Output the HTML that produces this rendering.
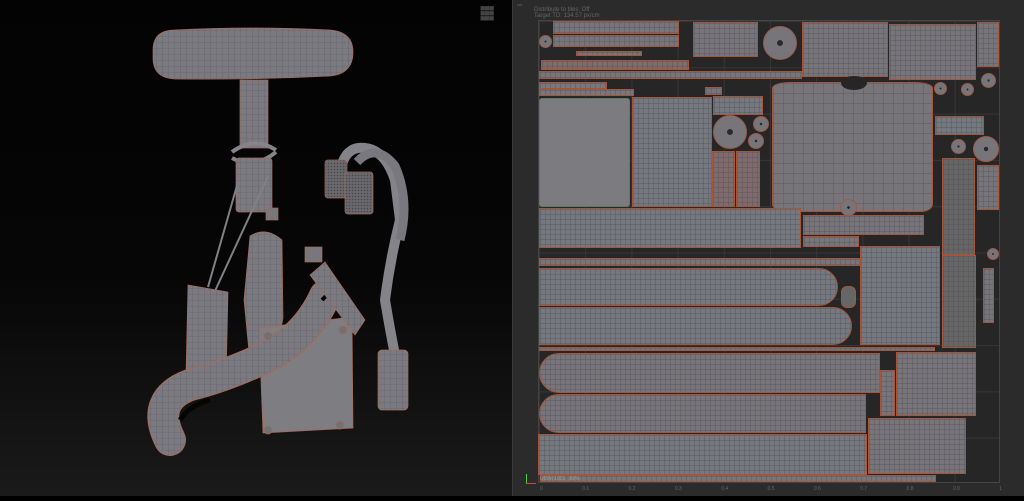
<!DOCTYPE html>
<html><head><meta charset="utf-8"><style>
*{margin:0;padding:0;box-sizing:border-box}
body{width:1024px;height:496px;overflow:hidden;background:#000;position:relative;font-family:"Liberation Sans",sans-serif}
#left{position:absolute;left:0;top:0;width:512px;height:496px;background:linear-gradient(#030303 0%,#060606 55%,#1a1a1a 100%)}
#right{position:absolute;left:512px;top:0;width:512px;height:496px;background:#2b2b2b;border-left:1px solid #3a3a3a}
.uv{position:absolute;left:538px;top:20px;width:462px;height:463px;border:1px solid #444;
background-color:#262626;
background-image:linear-gradient(#363636 1px,transparent 1px),linear-gradient(90deg,#363636 1px,transparent 1px);
background-size:46.2px 46.3px}
.i{position:absolute;border:1px solid #a5553a;background-color:#777579;
background-image:linear-gradient(rgba(70,70,80,.28) 1px,transparent 1px),linear-gradient(90deg,rgba(70,70,80,.28) 1px,transparent 1px);
background-size:5px 5px}
.b{background-color:#76787f}
.r{background-color:#7f6b6b}
.g{background-color:#666}
.c{position:absolute;border-radius:50%;background:radial-gradient(#2a2a2a 0 12%,#777579 14%);border:1px solid #9a5a48}
.t{position:absolute;color:#666;font-size:6px}
</style></head><body>
<div id="left">
<svg width="512" height="496" viewBox="0 0 512 496">
<defs>
<pattern id="m" width="6" height="6" patternUnits="userSpaceOnUse"><rect width="6" height="6" fill="#7a7a80"/><path d="M0 0H6M0 0V6" stroke="#5a5b60" stroke-width=".6"/></pattern>
<pattern id="k" width="3" height="3" patternUnits="userSpaceOnUse"><rect width="3" height="3" fill="#69696d"/><circle cx="1.5" cy="1.5" r=".8" fill="#48484c"/></pattern>
</defs>
<g stroke="#a86a58" stroke-width=".7">
<path d="M153 50 Q153 30 175 30 Q250 26 330 30 Q353 32 353 52 Q353 74 330 76 Q250 80 175 79 Q153 78 153 58Z" fill="url(#m)"/>
<rect x="240" y="80" width="28" height="68" fill="url(#m)"/>
<path d="M232 152 Q254 136 276 150 M232 158 Q254 170 276 152" stroke="#858589" stroke-width="4" fill="none"/>
<rect x="236" y="158" width="36" height="54" rx="3" fill="url(#m)"/>
<rect x="266" y="208" width="12" height="12" fill="#77777c"/>
<path d="M238 182 L208 287 M268 176 L215 291" stroke="#808085" stroke-width="2" fill="none"/>
<path d="M188 285 L228 292 L226 382 L186 374Z" fill="url(#m)"/>
<path d="M250 236 Q266 226 282 240 L283 318 Q276 360 250 362 L244 300Z" fill="url(#m)"/>
<path d="M259 328 L352 317 L353 428 L263 433Z" fill="#7d7d82"/>
<path d="M170 440 Q150 400 190 385 Q220 378 260 360 Q305 340 325 296" stroke="#a86a58" stroke-width="32" fill="none" stroke-linecap="round"/>
<path d="M170 440 Q150 400 190 385 Q220 378 260 360 Q305 340 325 296" stroke="url(#m)" stroke-width="30" fill="none" stroke-linecap="round"/>
<path d="M180 420 Q190 405 210 400" stroke="#050505" stroke-width="5" fill="none"/>
<path d="M322 300 L332 290" stroke="#050505" stroke-width="4"/>
<path d="M340 172 Q345 145 365 148 Q385 150 395 180 L400 220 Q390 260 385 300 Q390 330 395 355" stroke="#838389" stroke-width="10" fill="none"/>
<path d="M357 162 Q376 142 395 166 Q410 200 400 240" stroke="#78787e" stroke-width="9" fill="none"/>
<rect x="325" y="160" width="22" height="38" rx="3" fill="url(#k)"/>
<rect x="345" y="172" width="28" height="42" rx="3" fill="url(#k)"/>
<rect x="305" y="247" width="17" height="15" fill="#77777c"/>
<path d="M310 275 L325 262 L365 320 L355 335Z" fill="url(#m)"/>
<rect x="378" y="350" width="30" height="60" rx="4" fill="url(#m)"/>
<circle cx="268" cy="336" r="4" fill="#707075"/><circle cx="343" cy="330" r="4" fill="#707075"/><circle cx="340" cy="425" r="4" fill="#707075"/><circle cx="268" cy="430" r="4" fill="#707075"/>
</g>
</svg>
<div style="position:absolute;left:480px;top:6px;width:18px;height:16px;color:#444;font-size:9px;letter-spacing:-1px;line-height:5px">■■■<br>■■■<br>■■■</div>
</div>
<div id="right"></div>
<div class="t" style="left:534px;top:7px;font-size:6px">Distribute to tiles: Off<br>Target TD: 134.57 px/cm</div>
<div class="t" style="left:517px;top:2px;font-size:4px">cm</div>
<div class="uv"></div>
<div class="i" style="left:553px;top:21px;width:126px;height:13px"></div>
<div class="i" style="left:553px;top:35px;width:126px;height:12px"></div>
<div class="c" style="left:539px;top:35px;width:13px;height:13px"></div>
<div class="i" style="left:576px;top:51px;width:66px;height:5px"></div>
<div class="i" style="left:693px;top:22px;width:65px;height:35px"></div>
<div class="c" style="left:763px;top:26px;width:34px;height:34px"></div>
<div class="i" style="left:802px;top:22px;width:86px;height:55px"></div>
<div class="i" style="left:889px;top:24px;width:87px;height:56px"></div>
<div class="i" style="left:977px;top:22px;width:22px;height:45px"></div>
<div class="i r" style="left:541px;top:60px;width:148px;height:10px"></div>
<div class="i" style="left:539px;top:71px;width:263px;height:8px"></div>
<div class="i b" style="left:539px;top:82px;width:68px;height:7px"></div>
<div class="i b" style="left:539px;top:89px;width:95px;height:7px"></div>
<div class="i" style="left:705px;top:87px;width:17px;height:8px"></div>
<div class="i" style="left:539px;top:98px;width:91px;height:109px;background:#7c7c80;border-color:#5e7a5e;border-radius:3px"></div>
<div class="i b" style="left:632px;top:97px;width:80px;height:110px"></div>
<div class="i b" style="left:713px;top:96px;width:50px;height:19px"></div>
<div class="c" style="left:713px;top:115px;width:34px;height:34px"></div>
<div class="c" style="left:753px;top:116px;width:16px;height:16px"></div>
<div class="c" style="left:748px;top:133px;width:16px;height:16px"></div>
<div class="i r" style="left:712px;top:151px;width:23px;height:56px"></div>
<div class="i r" style="left:736px;top:151px;width:24px;height:56px"></div>
<div class="i" style="left:772px;top:82px;width:161px;height:130px;border-radius:18px 18px 12px 12px/6px 6px 8px 8px;background-size:10px 10px"></div>
<div class="c" style="left:841px;top:76px;width:26px;height:14px;background:#262626;border:none"></div>
<div class="c" style="left:840px;top:199px;width:17px;height:17px"></div>
<div class="i b" style="left:935px;top:116px;width:49px;height:19px"></div>
<div class="c" style="left:934px;top:82px;width:13px;height:13px"></div>
<div class="c" style="left:961px;top:83px;width:13px;height:13px"></div>
<div class="c" style="left:981px;top:73px;width:15px;height:15px"></div>
<div class="c" style="left:951px;top:139px;width:15px;height:15px"></div>
<div class="c" style="left:973px;top:136px;width:26px;height:26px"></div>
<div class="i g" style="left:942px;top:158px;width:33px;height:97px"></div>
<div class="i" style="left:977px;top:165px;width:22px;height:45px"></div>
<div class="i b" style="left:539px;top:208px;width:262px;height:40px"></div>
<div class="i" style="left:803px;top:215px;width:121px;height:20px"></div>
<div class="i" style="left:803px;top:236px;width:56px;height:11px"></div>
<div class="i" style="left:539px;top:258px;width:321px;height:8px"></div>
<div class="i b" style="left:539px;top:268px;width:299px;height:38px;border-radius:0 20px 20px 0"></div>
<div class="i b" style="left:539px;top:307px;width:313px;height:38px;border-radius:0 20px 20px 0"></div>
<div class="i" style="left:841px;top:286px;width:15px;height:22px;border-radius:6px;background:#666"></div>
<div class="i b" style="left:860px;top:246px;width:80px;height:99px"></div>
<div class="i g" style="left:942px;top:255px;width:34px;height:93px"></div>
<div class="i" style="left:539px;top:347px;width:396px;height:4px"></div>
<div class="i" style="left:539px;top:353px;width:341px;height:40px;border-radius:20px 0 0 20px"></div>
<div class="i" style="left:539px;top:394px;width:327px;height:39px;border-radius:20px 0 0 20px"></div>
<div class="i" style="left:880px;top:370px;width:15px;height:46px"></div>
<div class="i" style="left:896px;top:352px;width:80px;height:64px"></div>
<div class="i b" style="left:538px;top:434px;width:329px;height:41px"></div>
<div class="i" style="left:868px;top:418px;width:98px;height:56px"></div>
<div class="i" style="left:540px;top:475px;width:396px;height:7px"></div>
<div class="i" style="left:983px;top:268px;width:11px;height:55px"></div>
<div class="c" style="left:987px;top:248px;width:12px;height:12px"></div>
<div class="t" style="left:540px;top:476px;color:#999;font-size:5px">UDIM 1001 &nbsp; 83%</div>
<div class="t" style="left:540px;top:486px;font-size:5px;word-spacing:38px">0 0.1 0.2 0.3 0.4 0.5 0.6 0.7 0.8 0.9 1</div>
<div style="position:absolute;left:526px;top:474px;width:1px;height:10px;background:#4c4"></div>
<div style="position:absolute;left:526px;top:483px;width:10px;height:1px;background:#c44"></div>
</body></html>
